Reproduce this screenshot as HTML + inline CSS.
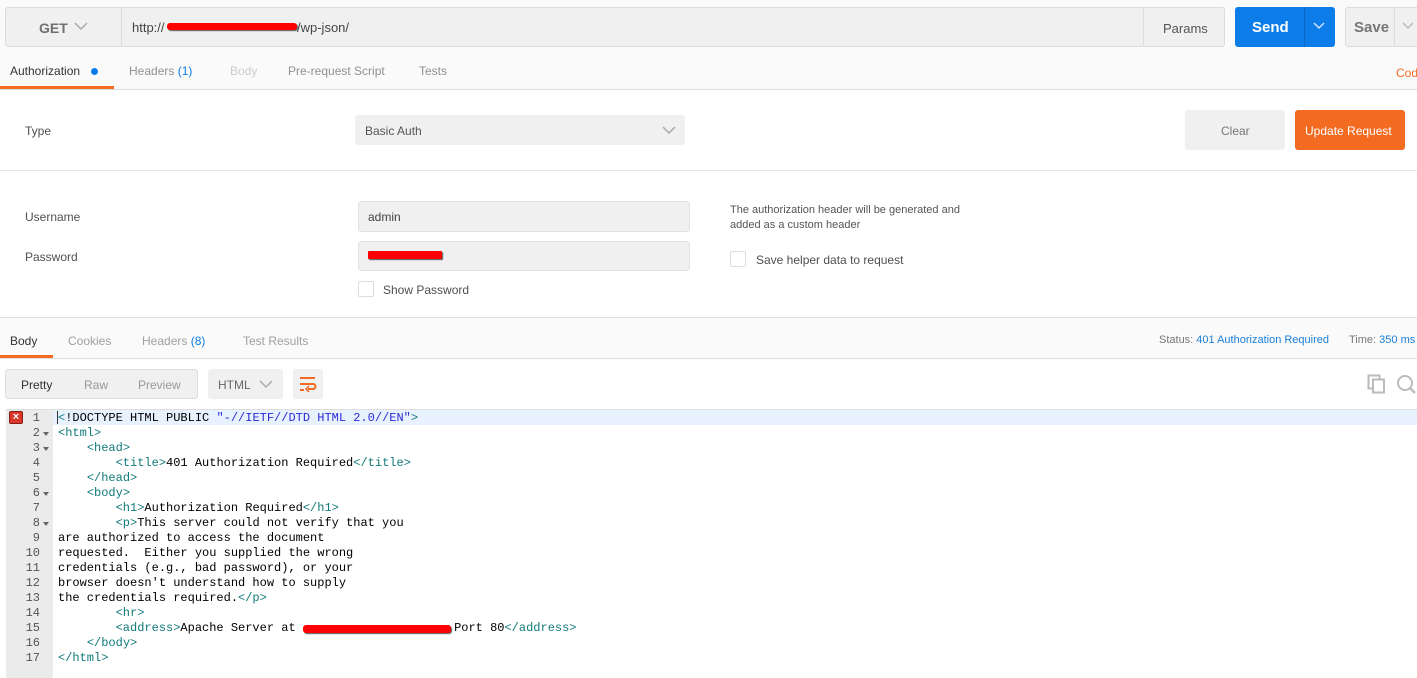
<!DOCTYPE html>
<html><head><style>
*{box-sizing:border-box;margin:0;padding:0}
body{width:1417px;height:678px;background:#fafafa;font-family:"Liberation Sans",sans-serif;font-size:12px;color:#505050;position:relative;overflow:hidden}
.a{position:absolute}
.red{position:absolute;background:#f00;border-radius:3px;box-shadow:1px 1px 1px #555}
.code{position:absolute;left:58px;top:411px;font-family:"Liberation Mono",monospace;font-size:12px;line-height:15px;color:#000;white-space:pre}
.t{color:#117a7a}.s{color:#2b2bd8}
.ln{position:absolute;left:6px;top:411px;width:47px;height:268px;background:#ebebeb;font-family:"Liberation Mono",monospace;font-size:12px;line-height:15px;color:#555}
.ln div{height:15px;text-align:right;padding-right:13px;position:relative}
.ln div.f::after{content:"";position:absolute;right:4px;top:6px;border-left:3px solid transparent;border-right:3px solid transparent;border-top:4px solid #666}
.cb{position:absolute;width:16px;height:16px;border:1px solid #ddd;background:#fff;border-radius:2px}
</style></head><body>
<div class="a" style="left:5px;top:7px;width:1220px;height:40px;background:#f0f0f0;border:1px solid #dcdcdc;border-radius:3px"></div>
<div class="a" style="left:121px;top:7px;width:1px;height:40px;background:#dcdcdc"></div>
<div class="a" style="left:39px;top:20px;font-size:14px;font-weight:bold;color:#707070">GET</div>
<svg class="a" style="left:74px;top:22px" width="14" height="9"><path d="M1 1l6 6 6-6" fill="none" stroke="#aaa" stroke-width="1.5"/></svg>
<div class="a" style="left:132px;top:20px;font-size:13px;color:#444">http://</div>
<div class="red" style="left:167px;top:23px;width:130px;height:7px"></div>
<div class="a" style="left:297px;top:20px;font-size:13px;color:#444">/wp-json/</div>
<div class="a" style="left:1143px;top:7px;width:1px;height:40px;background:#dcdcdc"></div>
<div class="a" style="left:1163px;top:21px;font-size:13px;color:#555">Params</div>
<div class="a" style="left:1235px;top:7px;width:100px;height:40px;background:#0c7de8;border-radius:3px"></div>
<div class="a" style="left:1304px;top:7px;width:1px;height:40px;background:#0a68c2"></div>
<div class="a" style="left:1252px;top:19px;font-size:15px;font-weight:bold;color:#fff">Send</div>
<svg class="a" style="left:1313px;top:22px" width="12" height="8"><path d="M1 1l5 5 5-5" fill="none" stroke="#cfe3fa" stroke-width="1.5"/></svg>
<div class="a" style="left:1345px;top:7px;width:80px;height:40px;background:#f0f0f0;border:1px solid #dcdcdc;border-radius:3px"></div>
<div class="a" style="left:1394px;top:7px;width:1px;height:40px;background:#dcdcdc"></div>
<div class="a" style="left:1354px;top:19px;font-size:15px;font-weight:bold;color:#777">Save</div>
<svg class="a" style="left:1402px;top:22px" width="12" height="8"><path d="M1 1l5 5 5-5" fill="none" stroke="#bbb" stroke-width="1.5"/></svg>
<div class="a" style="left:10px;top:64px;font-size:12px;color:#333">Authorization</div>
<div class="a" style="left:91px;top:68px;width:7px;height:7px;border-radius:50%;background:#0c7de8"></div>
<div class="a" style="left:0;top:86px;width:114px;height:3px;background:#f26b21"></div>
<div class="a" style="left:129px;top:64px;color:#909090">Headers <span style="color:#0c7de8">(1)</span></div>
<div class="a" style="left:230px;top:64px;color:#ccc">Body</div>
<div class="a" style="left:288px;top:64px;color:#909090">Pre-request Script</div>
<div class="a" style="left:419px;top:64px;color:#909090">Tests</div>
<div class="a" style="left:1396px;top:66px;color:#f26b21">Code</div>
<div class="a" style="left:0;top:89px;width:1417px;height:1px;background:#ddd"></div>
<div class="a" style="left:0;top:90px;width:1417px;height:227px;background:#fff"></div>
<div class="a" style="left:25px;top:124px;color:#505050">Type</div>
<div class="a" style="left:355px;top:115px;width:330px;height:30px;background:#f0f0f0;border-radius:3px"></div>
<div class="a" style="left:365px;top:124px;color:#555">Basic Auth</div>
<svg class="a" style="left:662px;top:126px" width="14" height="9"><path d="M1 1l6 6 6-6" fill="none" stroke="#aaa" stroke-width="1.5"/></svg>
<div class="a" style="left:1185px;top:110px;width:100px;height:40px;background:#f0f0f0;border-radius:3px"></div>
<div class="a" style="left:1221px;top:124px;color:#777">Clear</div>
<div class="a" style="left:1295px;top:110px;width:110px;height:40px;background:#f26b21;border-radius:3px"></div>
<div class="a" style="left:1305px;top:124px;color:#fff">Update Request</div>
<div class="a" style="left:0;top:170px;width:1417px;height:1px;background:#e4e4e4"></div>
<div class="a" style="left:25px;top:210px">Username</div>
<div class="a" style="left:358px;top:201px;width:332px;height:31px;background:#f0f0f0;border:1px solid #e2e2e2;border-radius:3px"></div>
<div class="a" style="left:368px;top:210px;color:#444">admin</div>
<div class="a" style="left:25px;top:250px">Password</div>
<div class="a" style="left:358px;top:241px;width:332px;height:30px;background:#f0f0f0;border:1px solid #e2e2e2;border-radius:3px"></div>
<div class="red" style="left:368px;top:251px;width:74px;height:8px;border-radius:1px"></div>
<div class="cb" style="left:358px;top:281px"></div>
<div class="a" style="left:383px;top:283px">Show Password</div>
<div class="a" style="left:730px;top:203px;font-size:11px;line-height:15px;color:#555">The authorization header will be generated and<br>added as a custom header</div>
<div class="cb" style="left:730px;top:251px"></div>
<div class="a" style="left:756px;top:253px">Save helper data to request</div>
<div class="a" style="left:0;top:317px;width:1417px;height:1px;background:#e0e0e0"></div>
<div class="a" style="left:10px;top:334px;color:#333">Body</div>
<div class="a" style="left:0;top:355px;width:53px;height:3px;background:#f26b21"></div>
<div class="a" style="left:68px;top:334px;color:#a0a0a0">Cookies</div>
<div class="a" style="left:142px;top:334px;color:#a0a0a0">Headers <span style="color:#0c7de8">(8)</span></div>
<div class="a" style="left:243px;top:334px;color:#a0a0a0">Test Results</div>
<div class="a" style="left:1159px;top:334px;font-size:11px;color:#777">Status: <span style="color:#1b7fd8">401 Authorization Required</span></div>
<div class="a" style="left:1349px;top:334px;font-size:11px;color:#777">Time: <span style="color:#1b7fd8">350 ms</span></div>
<div class="a" style="left:0;top:358px;width:1417px;height:1px;background:#ddd"></div>
<div class="a" style="left:0;top:359px;width:1417px;height:319px;background:#fff"></div>
<div class="a" style="left:5px;top:369px;width:193px;height:30px;background:#f0f0f0;border:1px solid #dcdcdc;border-radius:3px"></div>
<div class="a" style="left:21px;top:378px;color:#333">Pretty</div>
<div class="a" style="left:84px;top:378px;color:#999">Raw</div>
<div class="a" style="left:138px;top:378px;color:#999">Preview</div>
<div class="a" style="left:208px;top:369px;width:75px;height:30px;background:#f0f0f0;border-radius:3px"></div>
<div class="a" style="left:218px;top:378px;color:#666">HTML</div>
<svg class="a" style="left:259px;top:380px" width="14" height="9"><path d="M1 1l6 6 6-6" fill="none" stroke="#aaa" stroke-width="1.5"/></svg>
<div class="a" style="left:293px;top:369px;width:30px;height:30px;background:#f0f0f0;border-radius:3px"></div>
<svg class="a" style="left:299px;top:376px" width="18" height="16"><path d="M1 2h15M1 8h13a2.5 2.5 0 0 1 0 5H9M1 14h4" fill="none" stroke="#f26b21" stroke-width="2"/><path d="M10 10l-3 3 3 3" fill="none" stroke="#f26b21" stroke-width="1.5"/></svg>
<svg class="a" style="left:1367px;top:374px" width="20" height="20"><rect x="1.5" y="1.5" width="11" height="13" fill="none" stroke="#bbb" stroke-width="2"/><rect x="6" y="5.5" width="11" height="13" fill="#fff" stroke="#bbb" stroke-width="2"/></svg>
<svg class="a" style="left:1396px;top:374px" width="21" height="20"><circle cx="9" cy="9" r="7" fill="none" stroke="#bbb" stroke-width="2"/><path d="M14 14l5 5" stroke="#bbb" stroke-width="2.5"/></svg>
<div class="a" style="left:6px;top:409px;width:1411px;height:1px;background:#ddd"></div>
<div class="a" style="left:53px;top:410px;width:1364px;height:15px;background:#e8f2fe"></div>
<div class="ln" style="top:410px;padding-top:1px">
<div>1</div><div class="f">2</div><div class="f">3</div><div>4</div><div>5</div><div class="f">6</div><div>7</div><div class="f">8</div><div>9</div><div>10</div><div>11</div><div>12</div><div>13</div><div>14</div><div>15</div><div>16</div><div>17</div>
</div>
<div class="a" style="left:9px;top:411px;width:14px;height:13px;background:#d9372b;border:1px solid #8a1a14;border-radius:2px;color:#fff;font-size:11px;line-height:11px;text-align:center;font-weight:bold">×</div>
<div class="a" style="left:57px;top:411px;width:1px;height:13px;background:#333"></div>
<div class="code"><span class="t">&lt;</span>!DOCTYPE HTML PUBLIC <span class="s">"-//IETF//DTD HTML 2.0//EN"</span><span class="t">&gt;</span>
<span class="t">&lt;html&gt;</span>
    <span class="t">&lt;head&gt;</span>
        <span class="t">&lt;title&gt;</span>401 Authorization Required<span class="t">&lt;/title&gt;</span>
    <span class="t">&lt;/head&gt;</span>
    <span class="t">&lt;body&gt;</span>
        <span class="t">&lt;h1&gt;</span>Authorization Required<span class="t">&lt;/h1&gt;</span>
        <span class="t">&lt;p&gt;</span>This server could not verify that you
are authorized to access the document
requested.  Either you supplied the wrong
credentials (e.g., bad password), or your
browser doesn't understand how to supply
the credentials required.<span class="t">&lt;/p&gt;</span>
        <span class="t">&lt;hr&gt;</span>
        <span class="t">&lt;address&gt;</span>Apache Server at                      Port 80<span class="t">&lt;/address&gt;</span>
    <span class="t">&lt;/body&gt;</span>
<span class="t">&lt;/html&gt;</span></div>
<div class="red" style="left:303px;top:625px;width:148px;height:8px"></div>
</body></html>
